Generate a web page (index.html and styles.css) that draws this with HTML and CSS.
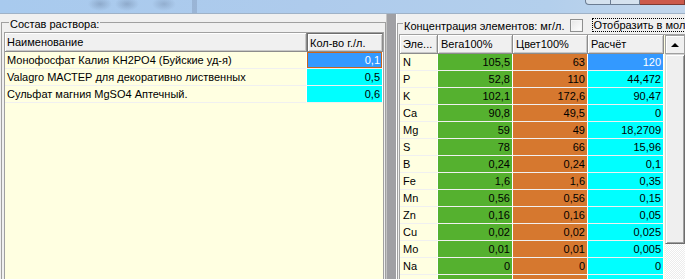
FILE: index.html
```html
<!DOCTYPE html>
<html lang="ru">
<head>
    <title>Состав раствора</title>
    <meta charset="utf-8"/>
    <link rel="stylesheet" href="styles.css">
</head>
<body>
    <div class="titlebar">
        <div class="blur"></div>
        <div class="winbtns">
            <span class="wb wb-min"></span>
            <span class="wb wb-max"></span>
            <span class="wb wb-close"></span>
        </div>
    </div>

    <div class="main">
        <fieldset class="group group-left">
            <legend>Состав раствора:</legend>
            <div class="gridbox">
                <table class="grid grid-left">
                    <tr>
                        <th class="col-name">Наименование</th>
                        <th class="col-qty hd-active">Кол-во г./л.</th>
                    </tr>
                    <tr>
                        <td>Монофосфат Калия KH2PO4 (Буйские уд-я)</td>
                        <td class="num sel focus">0,1</td>
                    </tr>
                    <tr>
                        <td>Valagro МАСТЕР для декоративно лиственных</td>
                        <td class="num cyan">0,5</td>
                    </tr>
                    <tr>
                        <td>Сульфат магния MgSO4 Аптечный.</td>
                        <td class="num cyan">0,6</td>
                    </tr>
                </table>
            </div>
        </fieldset>

        <div class="splitter"></div>

        <fieldset class="group group-right">
            <legend>
                <span class="legend-text">Концентрация элементов: мг/л.</span>
                <span class="check"></span>
                <span class="focus-text">Отобразить в моль/л.</span>
            </legend>
            <div class="gridbox gridbox-right">
                <table class="grid grid-right">
                    <tr>
                        <th class="col-el">Эле...</th>
                        <th class="col-v">Вега100%</th>
                        <th class="col-c">Цвет100%</th>
                        <th class="col-r">Расчёт</th>
                    </tr>
                    <tr><td class="el">N</td><td class="num green">105,5</td><td class="num orange">63</td><td class="num sel">120</td></tr>
                    <tr><td class="el">P</td><td class="num green">52,8</td><td class="num orange">110</td><td class="num cyan">44,472</td></tr>
                    <tr><td class="el">K</td><td class="num green">102,1</td><td class="num orange">172,6</td><td class="num cyan">90,47</td></tr>
                    <tr><td class="el">Ca</td><td class="num green">90,8</td><td class="num orange">49,5</td><td class="num cyan">0</td></tr>
                    <tr><td class="el">Mg</td><td class="num green">59</td><td class="num orange">49</td><td class="num cyan">18,2709</td></tr>
                    <tr><td class="el">S</td><td class="num green">78</td><td class="num orange">66</td><td class="num cyan">15,96</td></tr>
                    <tr><td class="el">B</td><td class="num green">0,24</td><td class="num orange">0,24</td><td class="num cyan">0,1</td></tr>
                    <tr><td class="el">Fe</td><td class="num green">1,6</td><td class="num orange">1,6</td><td class="num cyan">0,35</td></tr>
                    <tr><td class="el">Mn</td><td class="num green">0,56</td><td class="num orange">0,56</td><td class="num cyan">0,15</td></tr>
                    <tr><td class="el">Zn</td><td class="num green">0,16</td><td class="num orange">0,16</td><td class="num cyan">0,05</td></tr>
                    <tr><td class="el">Cu</td><td class="num green">0,02</td><td class="num orange">0,02</td><td class="num cyan">0,025</td></tr>
                    <tr><td class="el">Mo</td><td class="num green">0,01</td><td class="num orange">0,01</td><td class="num cyan">0,005</td></tr>
                    <tr><td class="el">Na</td><td class="num green">0</td><td class="num orange">0</td><td class="num cyan">0</td></tr>
                    <tr><td class="el">Cl</td><td class="num green">0</td><td class="num orange">0</td><td class="num cyan">0</td></tr>
                </table>
                <div class="gap"></div>
                <div class="vscroll">
                    <div class="sb-btn"><span class="arrow"></span></div>
                    <div class="sb-thumb"></div>
                    <div class="sb-track"></div>
                </div>
            </div>
        </fieldset>
    </div>
</body>
</html>
```

FILE: styles.css
```css
* {
    box-sizing: border-box;
}
body {
    margin: 0;
    width: 685px;
    height: 279px;
    overflow: hidden;
    background-color: #f0f0f0;
    font-family: "Liberation Sans", Arial, sans-serif;
    font-size: 11px;
    color: #000;
}

/* window caption (blurred in the shot) */
.titlebar {
    height: 14px;
    display: flex;
    justify-content: space-between;
    background: linear-gradient(90deg, #a8caee 0%, #aecbec 45%, #b3cfec 80%, #c2d6ec 100%);
    border-bottom: 1px solid #9fb2c7;
}
.blur {
    margin-left: 85px;
    width: 115px;
    height: 13px;
    background:
        radial-gradient(ellipse 12px 7px at 15px 4px, rgba(90,110,140,0.35), transparent),
        radial-gradient(ellipse 12px 7px at 42px 4px, rgba(90,110,140,0.35), transparent),
        radial-gradient(ellipse 12px 7px at 79px 4px, rgba(90,110,140,0.3), transparent),
        linear-gradient(90deg, transparent 0, transparent 107px, rgba(120,140,170,0.35) 107px, rgba(120,140,170,0.35) 112px, transparent 112px);
}
.winbtns {
    display: flex;
    height: 5px;
}
.wb {
    height: 5px;
    border: 1px solid #6b7c92;
    border-top: none;
    background: #d5e2ef;
}
.wb-min {
    width: 26px;
    border-radius: 0 0 0 4px;
}
.wb-max {
    width: 29px;
    border-left: none;
}
.wb-close {
    width: 45px;
    border-left: none;
    background: #cc5a4c;
    border-color: #7e3a33;
}

.main {
    display: flex;
    height: 300px;
}

/* group boxes */
.group {
    margin: 0;
    min-width: 0;
    flex: none;
    border: 1px solid #a0a0a0;
    height: 300px;
}
.group legend {
    padding: 4px 1px 0;
    line-height: 12px;
    white-space: nowrap;
}
.group-left {
    width: 385px;
    margin-left: 1px;
    padding: 2px 1px 0 2px;
}
.group-left legend {
    margin-left: 5px;
}
.group-right {
    width: 340px;
    padding: 2px 0 0 1px;
}
.group-right legend {
    margin-left: 4px;
    padding-right: 0;
}
.legend-text {
    display: inline-block;
    vertical-align: bottom;
}
.check {
    display: inline-block;
    vertical-align: bottom;
    width: 13px;
    height: 13px;
    margin: 0 6px 0 2px;
    border: 1px solid #8e8f8f;
    background: linear-gradient(135deg, #e6e6e6, #ffffff);
    box-shadow: inset 0 0 0 1px #f4f4f4;
}
.focus-text {
    display: inline-block;
    vertical-align: bottom;
    padding: 0 1px;
    border: 1px dotted #000;
    line-height: 12px;
}

.splitter {
    width: 11px;
    flex: none;
    background: linear-gradient(90deg, #c4c4c4 0, #c4c4c4 1px, #a0a0a4 1px, #a0a0a4 10px, #ffffff 10px);
}

/* grids */
.gridbox {
    border: 1px solid #a0a0a0;
    background-color: #ffffe1;
    height: 300px;
}
.group-left .gridbox {
    width: 380px;
}
.gridbox-right {
    display: flex;
    align-items: flex-start;
    width: 330px;
}
.grid {
    border-collapse: separate;
    border-spacing: 0;
    table-layout: fixed;
    flex: none;
}
.grid th {
    height: 19px;
    padding: 0 2px;
    font-weight: normal;
    text-align: left;
    background-color: #f0f0f0;
    border-right: 1px solid #8c8c8c;
    border-bottom: 1px solid #8c8c8c;
    box-shadow: inset 1px 1px 0 #ffffff, inset -1px -1px 0 #c8c8c8;
    white-space: nowrap;
    overflow: hidden;
}
.grid td {
    height: 17px;
    padding: 0 2px;
    line-height: 16px;
    border-bottom: 1px solid #f0f0f0;
    border-right: 1px solid #ffffff;
    white-space: nowrap;
    overflow: hidden;
}
.grid-left {
    width: 378px;
}
.col-name {
    width: 302px;
}
.col-qty {
    width: 76px;
}
.hd-active {
    border: 1px solid #6d6d6d;
    box-shadow: inset 0 0 0 1px #a0a0a0;
}
.grid-right {
    width: 264px;
}
.col-el {
    width: 38px;
}
.col-v, .col-c {
    width: 75px;
}
.col-r {
    width: 76px;
}
.grid-right th {
    padding-left: 3px;
}
.grid-right td.el {
    padding-left: 3px;
}

.num {
    text-align: right;
}
.green {
    background-color: #55b12f;
}
.orange {
    background-color: #d6782f;
}
.cyan {
    background-color: #00ffff;
}
.sel {
    background-color: #3399ff;
    color: #fff;
}
.focus {
    box-shadow: inset 0 0 0 1px #c8661c;
}

.gap {
    width: 1px;
    flex: none;
}
.vscroll {
    width: 20px;
    flex: none;
    display: flex;
    flex-direction: column;
}
.sb-btn {
    height: 19px;
    display: flex;
    align-items: center;
    justify-content: center;
    background-color: #f0f0f0;
    border: 1px solid #a0a0a0;
    box-shadow: inset 1px 1px 0 #fff;
}
.arrow {
    width: 0;
    height: 0;
    border-left: 4px solid transparent;
    border-right: 4px solid transparent;
    border-bottom: 4px solid #000;
}
.sb-thumb {
    height: 190px;
    background-color: #efefef;
    border: 1px solid #d4d4d4;
    border-right-color: #6d6d6d;
    border-bottom-color: #6d6d6d;
    box-shadow: inset 1px 1px 0 #fff, inset -1px -1px 0 #a0a0a0;
}
.sb-track {
    height: 80px;
    background-color: #f6f6f6;
    background-image: repeating-conic-gradient(#ffffff 0 25%, #ececec 0 50%);
    background-size: 2px 2px;
}
```
